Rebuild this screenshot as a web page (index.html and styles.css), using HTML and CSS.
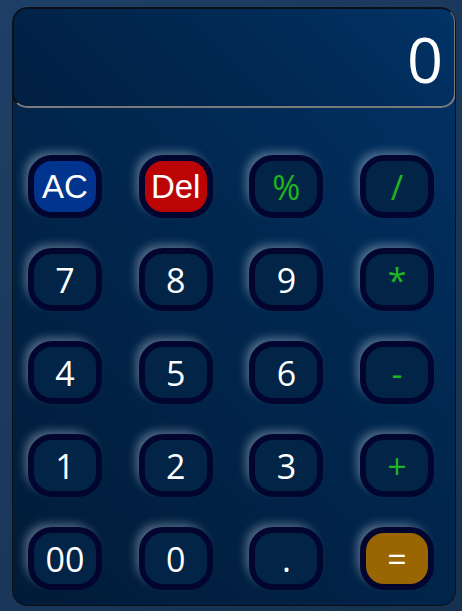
FILE: index.html
```html
<!DOCTYPE html>
<html>
<head>
<meta charset="utf-8">
<link rel="stylesheet" href="styles.css">
</head>
<body>
<div class="calc">
  <div class="display">0</div>
  <div class="keys">
    <button class="key ac">AC</button>
    <button class="key del">Del</button>
    <button class="key op">%</button>
    <button class="key op">/</button>
    <button class="key">7</button>
    <button class="key">8</button>
    <button class="key">9</button>
    <button class="key op">*</button>
    <button class="key">4</button>
    <button class="key">5</button>
    <button class="key">6</button>
    <button class="key op">-</button>
    <button class="key">1</button>
    <button class="key">2</button>
    <button class="key">3</button>
    <button class="key op">+</button>
    <button class="key">00</button>
    <button class="key">0</button>
    <button class="key">.</button>
    <button class="key eq">=</button>
  </div>
</div>
</body>
</html>
```
FILE: styles.css
```css
html, body {
  margin: 0;
  height: 100%;
}
body {
  background: linear-gradient(135deg, #1e3f66 0%, #16314f 100%);
  padding: 7px 6px 0 12px;
  box-sizing: border-box;
  font-family: "Open Sans", sans-serif;
}
.calc {
  width: 444px;
  height: 599px;
  box-sizing: border-box;
  border: 1px solid #0b0f18;
  border-radius: 15px;
  background: linear-gradient(45deg, #011b38 0%, #012851 60%, #013366 100%);
  display: flex;
  flex-direction: column;
  overflow: hidden;
}
.display {
  height: 101px;
  box-sizing: border-box;
  border: 2px solid;
  border-color: #0b0f18 #7a7a7a #7a7a7a #0b0f18;
  border-radius: 15px;
  margin: -1px -1px 0 -1px;
  background: linear-gradient(45deg, #011f42 0%, #012a55 60%, #013366 100%);
  color: #fff;
  font-size: 63px;
  text-align: right;
  padding-right: 11px;
  line-height: 100px;
}
.keys {
  display: grid;
  grid-template-columns: repeat(4, 74px);
  grid-auto-rows: 63px;
  column-gap: 36.7px;
  row-gap: 30px;
  padding: 47px 0 0 15px;
}
.key {
  box-sizing: border-box;
  border: 6px solid #02062e;
  border-radius: 24px;
  background: #022447;
  color: #fff;
  font-family: "Open Sans", sans-serif;
  font-size: 34px;
  padding: 0;
  line-height: 1;
  box-shadow: -5px -5px 10px -2px rgba(210, 220, 235, 0.4);
}
.op {
  color: #1fb51f;
}
.ac {
  background: #00348f;
  font-family: "Liberation Sans", sans-serif;
  font-size: 33px;
}
.del {
  background: #bb0505;
  font-family: "Liberation Sans", sans-serif;
  font-size: 33px;
}
.eq {
  background: #9a6503;
}
```
